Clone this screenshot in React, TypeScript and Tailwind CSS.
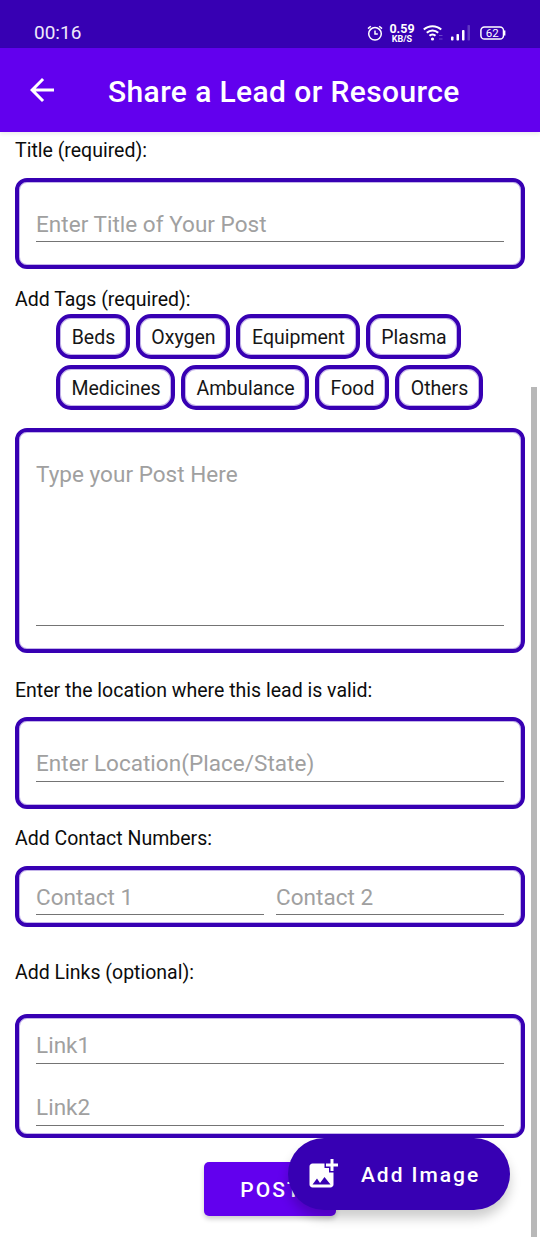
import type { ReactNode } from "react";

function Label({ className, children }: { className: string; children: ReactNode }) {
  return (
    <div className={`px-[15px] text-[19.5px] leading-6 text-[#0c0c0c] whitespace-nowrap ${className}`}>
      {children}
    </div>
  );
}

function Panel({ className, children }: { className: string; children: ReactNode }) {
  return (
    <div
      className={`mx-[15px] flex rounded-[12px] border-4 border-[#3700b3] px-[17px] shadow-[inset_0_0_0_1px_#c3b3e9] ${className}`}
    >
      {children}
    </div>
  );
}

function Field({ hint, className }: { hint: string; className: string }) {
  return (
    <div
      className={`min-w-0 flex-1 border-b border-[#747474] text-[22.5px] leading-[26px] tracking-[0.03px] whitespace-nowrap text-[#a0a0a0] ${className}`}
    >
      {hint}
    </div>
  );
}

function Tag({ name, className }: { name: string; className: string }) {
  return (
    <div
      className={`flex h-[45px] items-center justify-center rounded-[15px] border-4 border-[#3700b3] pt-[2px] pl-px text-[19.5px] text-[#161616] shadow-[inset_0_0_0_1px_#c3b3e9] ${className}`}
    >
      {name}
    </div>
  );
}

function StatusIcons() {
  return (
    <div className="flex items-start text-white">
      <svg className="mt-[25px] h-4 w-4" viewBox="0 0 16 16" fill="none" stroke="currentColor" strokeWidth="1.5">
        <circle cx="8" cy="8.8" r="6.3" />
        <path d="M8 5.5V9h2.8M1 3.6L3.8 1.2M15 3.600L12.200 1.200" />
      </svg>
      <div className="mt-[23px] ml-[6px] w-[26px] text-center font-bold">
        <div className="text-[12.5px] leading-[12px]">0.59</div>
        <div className="text-[9px] leading-[8px]">KB/S</div>
      </div>
      <svg className="mt-[24px] ml-[8px] h-[17px] w-[20px]" viewBox="0 0 20 17" fill="none" stroke="currentColor" strokeWidth="2.1">
        <path d="M.8 5.6a12.8 12.8 0 0 1 17.4 0M3.8 8.8a8.4 8.4 0 0 1 11.4 0M6.5 11.8a4.3 4.3 0 0 1 6 0" />
        <circle cx="9.5" cy="15" r="1.6" fill="currentColor" stroke="none" />
        <path d="M16 11.5h3.5M16 15h3.5" stroke="#6b45ca" strokeWidth="1" />
      </svg>
      <svg className="mt-[25px] ml-[8px] h-4 w-[20px]" viewBox="0 0 20 16" fill="currentColor">
        <rect x="0" y="11.5" width="2.5" height="4" rx=".8" />
        <rect x="5.5" y="9" width="2.5" height="6.5" rx=".8" />
        <rect x="11" y="5" width="2.5" height="10.5" rx=".8" />
        <rect x="16.5" y="0" width="2.5" height="15.5" rx=".8" opacity=".22" />
      </svg>
      <svg className="mt-[26px] ml-[9px] h-[14px] w-[26px]" viewBox="0 0 26 14" fill="none" stroke="currentColor">
        <rect x=".9" y=".9" width="22.6" height="12.2" rx="3.6" strokeWidth="1.5" />
        <path d="M24.6 4.5v5" strokeWidth="1.6" />
        <text x="12.2" y="11.1" textAnchor="middle" fontSize="11.5" fill="currentColor" stroke="none">62</text>
      </svg>
    </div>
  );
}

export default function App() {
  return (
    <div className="relative h-[1239px] w-[540px] overflow-hidden bg-white font-['Roboto',sans-serif]">
      <div className="flex h-12 justify-between bg-[#3700b3] pr-[34px] pl-[34px]">
        <div className="mt-[22px] text-[19px] leading-[22px] text-[#efe9fa]">00:16</div>
        <StatusIcons />
      </div>
      <header className="flex h-[84px] items-center bg-[#6200ee] pl-[24px] text-white shadow-[0_2px_4px_rgba(0,0,0,0.08)]">
        <svg className="h-9 w-9" viewBox="0 0 24 24" fill="currentColor">
          <path d="M20 11H7.83l5.59-5.59L12 4l-8 8 8 8 1.41-1.41L7.83 13H20v-2z" />
        </svg>
        <h1 className="mt-[3px] ml-[48px] text-[30px] leading-9 font-medium tracking-[0.38px] whitespace-nowrap">
          Share a Lead or Resource
        </h1>
      </header>

      <Label className="h-[46px] pt-[7px]">Title (required):</Label>
      <Panel className="h-[91px] pt-[29px]">
        <Field hint="Enter Title of Your Post" className="h-[31px]" />
      </Panel>

      <Label className="h-[45px] pt-[19px]">Add Tags (required):</Label>
      <div className="flex flex-col gap-[6px] pl-[56px]">
        <div className="flex gap-[6px]">
          <Tag name="Beds" className="w-[74px]" />
          <Tag name="Oxygen" className="w-[94px]" />
          <Tag name="Equipment" className="w-[124px]" />
          <Tag name="Plasma" className="w-[95px]" />
        </div>
        <div className="flex gap-[6px]">
          <Tag name="Medicines" className="w-[119px]" />
          <Tag name="Ambulance" className="w-[128px]" />
          <Tag name="Food" className="w-[74px]" />
          <Tag name="Others" className="w-[88px]" />
        </div>
      </div>

      <Panel className="mt-[18px] h-[225px] pt-[29px]">
        <Field hint="Type your Post Here" className="h-[165px]" />
      </Panel>

      <Label className="h-[64px] pt-[26px]">Enter the location where this lead is valid:</Label>
      <Panel className="h-[92px] pt-[29px]">
        <Field hint="Enter Location(Place/State)" className="h-[32px]" />
      </Panel>

      <Label className="h-[57px] pt-[18px]">Add Contact Numbers:</Label>
      <Panel className="h-[61px] gap-3 pt-[14px]">
        <Field hint="Contact 1" className="h-[31px]" />
        <Field hint="Contact 2" className="h-[31px]" />
      </Panel>

      <Label className="h-[87px] pt-[34px]">Add Links (optional):</Label>
      <Panel className="h-[124px] flex-col pt-[14px]">
        <Field hint="Link1" className="max-h-[32px]" />
        <Field hint="Link2" className="mt-[30px] max-h-[32px]" />
      </Panel>

      <div className="mt-6 ml-[204px] flex h-[54px] w-[132px] items-center justify-center rounded-[5px] bg-[#6200ee] pt-[3px] pl-[2px] text-[21px] font-medium tracking-[2px] text-white shadow-[0_3px_5px_rgba(0,0,0,0.2)]">
        POST
      </div>

      <div className="absolute top-[1138px] left-[288px] flex h-[72px] w-[222px] items-center rounded-full bg-[#3700b3] pl-[17px] text-white shadow-[0_8px_12px_rgba(0,0,0,0.2)]">
        <svg className="h-9 w-9" viewBox="0 0 24 24" fill="currentColor">
          <path d="M19 7v2.99s-1.99.01-2 0V7h-3s.01-1.99 0-2h3V2h2v3h3v2h-3zm-3 4V8h-3V5H5c-1.1 0-2 .9-2 2v12c0 1.1.9 2 2 2h12c1.1 0 2-.9 2-2v-8h-3zM5 19l3-4 2 3 3-4 4 5H5z" />
        </svg>
        <span className="mt-[3px] ml-[20px] text-[21px] font-medium tracking-[1.95px] whitespace-nowrap">Add Image</span>
      </div>

      <div className="absolute top-[387px] right-[3px] h-[850px] w-[6px] bg-[#b8b8b8]" />
    </div>
  );
}
